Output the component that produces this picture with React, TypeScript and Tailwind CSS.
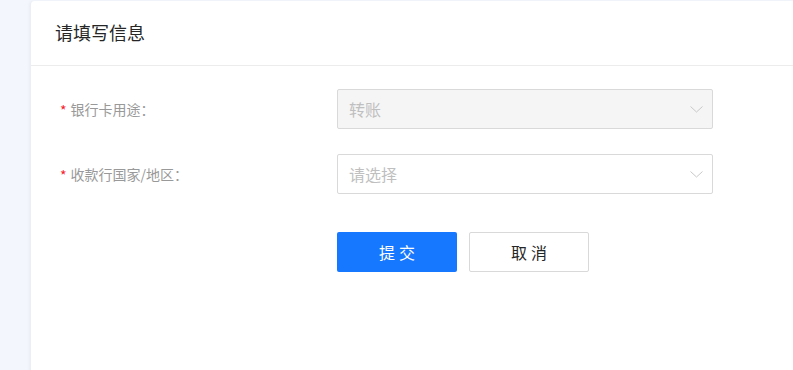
import React from "react";

const font = { fontFamily: '"Noto Sans CJK SC", "Noto Sans", sans-serif' };

function Chevron() {
  return (
    <svg width="13" height="12" viewBox="0 0 13 12" fill="none">
      <path d="M0.5 3.5 L6.5 9 L12.5 3.5" stroke="#c8c8c8" strokeWidth="1" />
    </svg>
  );
}

function Row({ label, value, disabled }: { label: string; value: string; disabled?: boolean }) {
  return (
    <div className="flex items-center h-[40px]">
      <div className="w-[277px] flex items-center text-[14px] text-[#999999]">
        <span className="text-[#f5222d] mr-[4px] text-[14px] leading-none mt-[2px]">*</span>
        <span>{label}</span>
      </div>
      <div
        className={`w-[376px] h-[40px] border border-[#d9d9d9] rounded-[2px] flex items-center justify-between pl-[11px] pr-[9px] ${
          disabled ? "bg-[#f5f5f5]" : "bg-white"
        }`}
      >
        <span className="text-[16px] text-[#bfbfbf]">{value}</span>
        <Chevron />
      </div>
    </div>
  );
}

export default function App() {
  return (
    <div className="w-[793px] h-[370px] overflow-hidden bg-[#f3f7fd] pl-[31px] pt-[1px]" style={font}>
      <div className="w-[800px] h-[400px] bg-white rounded-tl-[4px] shadow-[-2px_0_3px_rgba(0,0,0,0.04)]">
        <div className="h-[65px] border-b border-[#ececec] flex items-center pl-[24px] pb-[1px]">
          <span className="text-[18px] text-[#262626]">请填写信息</span>
        </div>
        <div className="pl-[29px] pt-[23px] flex flex-col">
          <Row label="银行卡用途：" value="转账" disabled />
          <div className="h-[25px]" />
          <Row label="收款行国家/地区：" value="请选择" />
          <div className="h-[38px]" />
          <div className="flex pl-[277px] gap-[12px]">
            <button className="w-[120px] h-[40px] bg-[#1677ff] text-white text-[16px] rounded-[2px] tracking-[4px] pl-[4px]">
              提交
            </button>
            <button className="w-[120px] h-[40px] bg-white border border-[#d9d9d9] text-[#262626] text-[16px] rounded-[2px] tracking-[4px] pl-[4px]">
              取消
            </button>
          </div>
        </div>
      </div>
    </div>
  );
}
